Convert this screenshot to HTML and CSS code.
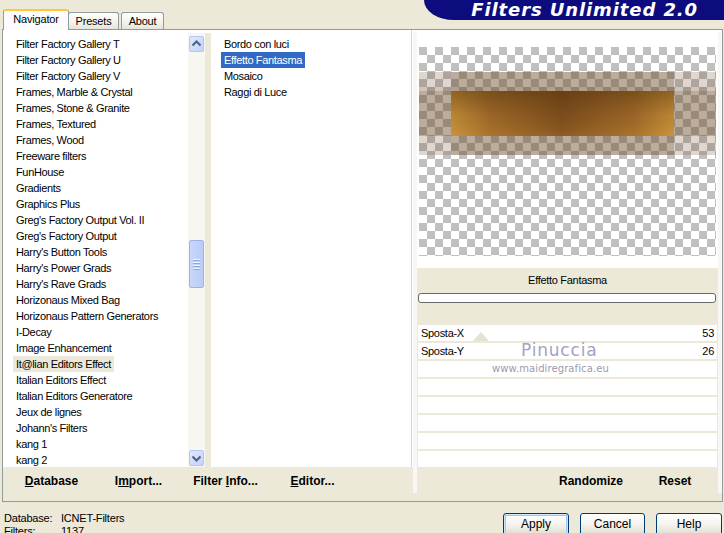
FILE: index.html
```html
<!DOCTYPE html>
<html>
<head>
<meta charset="utf-8">
<link rel="stylesheet" href="styles.css">
</head>
<body>
<div class="topbar">
  <div class="tabs">
    <div class="tab active">Navigator</div>
    <div class="tab presets">Presets</div>
    <div class="tab about">About</div>
  </div>
  <div class="brand">Filters Unlimited 2.0</div>
</div>
<div class="panel">
  <div class="left">
    <div class="lists">
      <ul class="list cats">
        <li>Filter Factory Gallery T</li>
        <li>Filter Factory Gallery U</li>
        <li>Filter Factory Gallery V</li>
        <li>Frames, Marble &amp; Crystal</li>
        <li>Frames, Stone &amp; Granite</li>
        <li>Frames, Textured</li>
        <li>Frames, Wood</li>
        <li>Freeware filters</li>
        <li>FunHouse</li>
        <li>Gradients</li>
        <li>Graphics Plus</li>
        <li>Greg's Factory Output Vol. II</li>
        <li>Greg's Factory Output</li>
        <li>Harry's Button Tools</li>
        <li>Harry's Power Grads</li>
        <li>Harry's Rave Grads</li>
        <li>Horizonaus Mixed Bag</li>
        <li>Horizonaus Pattern Generators</li>
        <li>I-Decay</li>
        <li>Image Enhancement</li>
        <li class="current">It@lian Editors Effect</li>
        <li>Italian Editors Effect</li>
        <li>Italian Editors Generatore</li>
        <li>Jeux de lignes</li>
        <li>Johann's Filters</li>
        <li>kang 1</li>
        <li>kang 2</li>
      </ul>
      <div class="scrollbar">
        <div class="sbtn"><svg width="15" height="16" viewBox="0 0 15 16"><path d="M3.5 9.5 L7.5 5.5 L11.5 9.5" fill="none" stroke="#4D6185" stroke-width="2"/></svg></div>
        <div class="thumb"><span></span><span></span><span></span><span></span></div>
        <div class="track-fill"></div>
        <div class="sbtn"><svg width="15" height="16" viewBox="0 0 15 16"><path d="M3.5 6.5 L7.5 10.5 L11.5 6.5" fill="none" stroke="#4D6185" stroke-width="2"/></svg></div>
      </div>
      <div class="gap"></div>
      <ul class="list filters">
        <li>Bordo con luci</li>
        <li class="selected">Effetto Fantasma</li>
        <li>Mosaico</li>
        <li>Raggi di Luce</li>
      </ul>
    </div>
    <div class="btnrow leftbtns">
      <div class="lbtn"><u>D</u>atabase</div>
      <div class="lbtn">I<u>m</u>port...</div>
      <div class="lbtn">Filter <u>I</u>nfo...</div>
      <div class="lbtn"><u>E</u>ditor...</div>
    </div>
  </div>
  <div class="right">
    <div class="preview">
      <svg width="297" height="209" viewBox="0 0 297 209">
        <defs>
          <pattern id="chk" width="16" height="16" patternUnits="userSpaceOnUse">
            <rect width="16" height="16" fill="#ffffff"/>
            <rect width="8" height="8" fill="#c0c0c0"/>
            <rect x="8" y="8" width="8" height="8" fill="#c0c0c0"/>
          </pattern>
          <linearGradient id="gh" x1="0" x2="1" y1="0" y2="0">
            <stop offset="0" stop-color="#C8923A"/>
            <stop offset="0.18" stop-color="#A26C2A"/>
            <stop offset="0.5" stop-color="#80501E"/>
            <stop offset="0.82" stop-color="#A26C2A"/>
            <stop offset="1" stop-color="#C8923A"/>
          </linearGradient>
          <linearGradient id="gv" x1="0" x2="0" y1="0" y2="1">
            <stop offset="0" stop-color="#4A2A08" stop-opacity="0.45"/>
            <stop offset="0.55" stop-color="#4A2A08" stop-opacity="0.1"/>
            <stop offset="1" stop-color="#E0A040" stop-opacity="0.15"/>
          </linearGradient>
        </defs>
        <rect width="297" height="209" fill="url(#chk)"/>
        <rect x="0" y="25" width="297" height="83" fill="#6E4A24" fill-opacity="0.22"/>
        <rect x="32" y="25" width="223" height="83" fill="#6E4A24" fill-opacity="0.3"/>
        <rect x="0" y="44" width="297" height="45" fill="#6E4A24" fill-opacity="0.3"/>
        <rect x="0" y="40" width="297" height="4" fill="#6E4A24" fill-opacity="0.12"/>
        <rect x="32" y="44" width="223" height="45" fill="url(#gh)"/>
        <rect x="32" y="44" width="223" height="45" fill="url(#gv)"/>
      </svg>
    </div>
    <div class="params">
      <div class="fname">Effetto Fantasma</div>
      <div class="progress"></div>
      <div class="rows">
        <div class="row"><span>Sposta-X</span><span>53</span></div>
        <div class="row"><span>Sposta-Y</span><span>26</span></div>
        <div class="row"></div>
        <div class="row"></div>
        <div class="row"></div>
        <div class="row"></div>
        <div class="row"></div>
        <div class="row"></div>
      </div>
    </div>
    <div class="btnrow rightbtns">
      <div class="rbtn">Randomize</div>
      <div class="rbtn">Reset</div>
    </div>
    <div class="wm-tri"></div>
    <div class="wm-name">Pinuccia</div>
    <div class="wm-url">www.maidiregrafica.eu</div>
  </div>
</div>
<div class="footer">
  <div class="status">
    <span>Database:</span><span>ICNET-Filters</span>
    <span>Filters:</span><span>1137</span>
  </div>
  <div class="buttons">
    <div class="xbtn default">Apply</div>
    <div class="xbtn">Cancel</div>
    <div class="xbtn">Help</div>
  </div>
</div>
</body>
</html>
```
FILE: styles.css
```css
* { box-sizing: border-box; margin: 0; padding: 0; }
html, body { width: 724px; height: 533px; overflow: hidden; }
body {
  background: #ECE9D8;
  font-family: "Liberation Sans", Arial, sans-serif;
  font-size: 11px;
  color: #000;
}

/* top bar */
.topbar {
  height: 29px;
  display: flex;
  justify-content: space-between;
  position: relative;
  z-index: 2;
}
.tabs {
  display: flex;
  align-items: flex-end;
  padding-left: 3px;
}
.tab {
  height: 17px;
  padding-top: 2px;
  text-align: center;
  border: 1px solid #919B9C;
  border-bottom: none;
  border-radius: 3px 3px 0 0;
  background: linear-gradient(#FFFFFF, #F3F2EC 60%, #E6E4DA);
  line-height: 13px;
  letter-spacing: -0.2px;
}
.tab.active {
  width: 66px;
  height: 21px;
  margin-bottom: -1px;
  background: #FCFCFE;
  border-top: 2px solid #FFC83C;
  padding-top: 2px;
  position: relative;
  z-index: 3;
}
.tab.presets { width: 51px; margin-left: -1px; }
.tab.about { width: 43px; margin-left: 2px; }

.brand {
  width: 300px;
  height: 20px;
  background: #0C0C7E;
  border-bottom-left-radius: 30px 20px;
  color: #fff;
  font-family: "DejaVu Sans", sans-serif;
  font-weight: bold;
  font-style: italic;
  font-size: 18px;
  letter-spacing: 0.9px;
  line-height: 19px;
  text-align: right;
  padding-right: 26px;
}

/* panel */
.panel {
  margin-left: 2px;
  width: 721px;
  height: 473px;
  border: 1px solid #919B9C;
  background: #ECE9D8;
  display: flex;
}
.left {
  width: 410px;
  display: flex;
  flex-direction: column;
}
.lists {
  height: 437px;
  display: flex;
  background: #fff;
}
.list {
  list-style: none;
  background: #fff;
  padding-top: 6px;
  padding-left: 10px;
  line-height: 16px;
  letter-spacing: -0.35px;
  white-space: nowrap;
}
.list li { padding: 0 3px; width: max-content; height: 16px; }
.cats { width: 185px; }
.cats li.current { background: #ECE9DA; }
.filters { width: 201px; border-right: 1px solid #DCD8C8; }
.filters li.selected { background: #316AC5; color: #fff; }
.gap { width: 6px; background: #ECE9D8; margin-top: 3px; }

.scrollbar {
  width: 17px;
  margin-top: 3px;
  background: #F7F6F1;
  display: flex;
  flex-direction: column;
  padding: 3px 1px 1px 1px;
}
.sbtn {
  height: 16px;
  border: 1px solid #B5C6EF;
  border-radius: 2px;
  background: linear-gradient(135deg, #E0E8FD, #C2D2FA);
}
.sbtn svg { display: block; margin-top: -1px; margin-left: -1px; }
.thumb {
  margin-top: 188px;
  height: 48px;
  border: 1px solid #9EB2EA;
  border-radius: 2px;
  background: linear-gradient(90deg, #CAD7FB, #BACBF7);
  display: flex;
  flex-direction: column;
  align-items: center;
  justify-content: center;
  gap: 1px;
}
.thumb span {
  width: 7px;
  height: 1px;
  background: #EEF4FE;
  box-shadow: 0 1px 0 #8CA8EE;
  margin-bottom: 1px;
}
.track-fill { flex: 1; }

.btnrow {
  display: flex;
  font-size: 12px;
  font-weight: bold;
  line-height: 14px;
}
.leftbtns { height: 34px; padding: 7px 0 0 5px; }
.lbtn { width: 87px; text-align: center; }

/* right section */
.right {
  width: 309px;
  height: 463px;
  border-left: 4px solid #F8F7F3;
  border-right: 4px solid #F8F7F3;
  border-top: 3px solid #FFFFFF;
  background: #ECE9D8;
  display: flex;
  flex-direction: column;
  position: relative;
}
.preview {
  height: 235px;
  background: #fff;
  padding: 14px 2px 0 2px;
}
.preview svg { display: block; }
.params { height: 199px; display: flex; flex-direction: column; }
.fname {
  height: 25px;
  padding-top: 6px;
  line-height: 13px;
  text-align: center;
  letter-spacing: -0.3px;
}
.progress {
  height: 10px;
  margin: 0 2px 0 1px;
  border: 1px solid #6A6A6A;
  border-radius: 3px;
  background: #fff;
}
.rows {
  margin-top: 22px;
  display: flex;
  flex-direction: column;
  gap: 2px;
}
.row {
  height: 16px;
  margin: 0 1px;
  background: #fff;
  display: flex;
  justify-content: space-between;
  padding: 0 3px 0 3px;
  line-height: 16px;
  letter-spacing: -0.3px;
}
.rightbtns {
  height: 26px;
  justify-content: flex-end;
  padding: 7px 1px 0 0;
}
.rbtn { width: 84px; text-align: center; }

/* watermark */
.wm-tri {
  position: absolute;
  left: 56px;
  top: 299px;
  width: 0; height: 0;
  border-left: 8px solid transparent;
  border-right: 8px solid transparent;
  border-bottom: 9px solid #E6E2D3;
}
.wm-name {
  position: absolute;
  left: 104px;
  top: 307px;
  font-family: "DejaVu Sans", sans-serif;
  font-size: 17px;
  letter-spacing: 0.8px;
  color: #A5A2C4;
}
.wm-url {
  position: absolute;
  left: 75px;
  top: 330px;
  font-family: "DejaVu Sans", sans-serif;
  font-size: 10px;
  letter-spacing: 0.1px;
  color: #9C9AAC;
}

/* footer */
.footer {
  height: 32px;
  display: flex;
  justify-content: space-between;
}
.status {
  display: grid;
  grid-template-columns: 57px auto;
  padding: 10px 0 0 4px;
  line-height: 13px;
  letter-spacing: -0.2px;
  align-content: start;
}
.buttons {
  display: flex;
  gap: 11px;
  padding: 11px 2px 0 0;
}
.xbtn {
  height: 23px;
  width: 65px;
  border: 1px solid #003C74;
  border-radius: 3px;
  background: linear-gradient(#FFFFFF, #F4F3EE 50%, #E4E0D4 90%, #D6D0C5);
  text-align: center;
  line-height: 20px;
  font-size: 12px;
}
.xbtn.default {
  width: 66px;
  box-shadow: inset 0 0 0 1px #CEE7FF, inset 0 0 0 2px #A6C4F2;
}
.xbtn:last-child { width: 66px; }
```
